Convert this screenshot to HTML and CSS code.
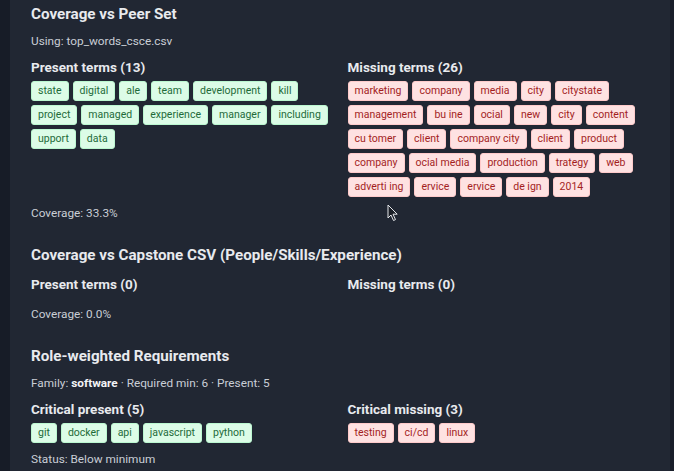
FILE: index.html
```html
<!DOCTYPE html>
<html lang="en">
<head>
<meta charset="utf-8">
<title>Coverage</title>
<link rel="stylesheet" href="styles.css">
</head>
<body>
<div class="page">
  <div class="rail"></div>
  <main class="card">
    <section class="block">
      <h2>Coverage vs Peer Set</h2>
      <p class="meta">Using: top_words_csce.csv</p>
      <div class="cols">
        <div class="col">
          <h3>Present terms (13)</h3>
          <div class="chips">
            <span class="chip ok">state</span><span class="chip ok">digital</span><span class="chip ok">ale</span><span class="chip ok">team</span><span class="chip ok">development</span><span class="chip ok">kill</span><span class="chip ok">project</span><span class="chip ok">managed</span><span class="chip ok">experience</span><span class="chip ok">manager</span><span class="chip ok">including</span><span class="chip ok">upport</span><span class="chip ok">data</span>
          </div>
        </div>
        <div class="col">
          <h3>Missing terms (26)</h3>
          <div class="chips">
            <span class="chip bad">marketing</span><span class="chip bad">company</span><span class="chip bad">media</span><span class="chip bad">city</span><span class="chip bad">citystate</span><span class="chip bad">management</span><span class="chip bad">bu ine</span><span class="chip bad">ocial</span><span class="chip bad">new</span><span class="chip bad">city</span><span class="chip bad">content</span><span class="chip bad">cu tomer</span><span class="chip bad">client</span><span class="chip bad">company city</span><span class="chip bad">client</span><span class="chip bad">product</span><span class="chip bad">company</span><span class="chip bad">ocial media</span><span class="chip bad">production</span><span class="chip bad">trategy</span><span class="chip bad">web</span><span class="chip bad">adverti ing</span><span class="chip bad">ervice</span><span class="chip bad">ervice</span><span class="chip bad">de ign</span><span class="chip bad">2014</span>
          </div>
        </div>
      </div>
      <p class="meta cov">Coverage: 33.3%</p>
    </section>

    <section class="block">
      <h2>Coverage vs Capstone CSV (People/Skills/Experience)</h2>
      <div class="cols tight">
        <div class="col"><h3>Present terms (0)</h3></div>
        <div class="col"><h3>Missing terms (0)</h3></div>
      </div>
      <p class="meta cov">Coverage: 0.0%</p>
    </section>

    <section class="block">
      <h2>Role-weighted Requirements</h2>
      <p class="meta">Family: <b>software</b> · Required min: 6 · Present: 5</p>
      <div class="cols">
        <div class="col">
          <h3>Critical present (5)</h3>
          <div class="chips">
            <span class="chip ok">git</span><span class="chip ok">docker</span><span class="chip ok">api</span><span class="chip ok">javascript</span><span class="chip ok">python</span>
          </div>
        </div>
        <div class="col">
          <h3>Critical missing (3)</h3>
          <div class="chips">
            <span class="chip bad">testing</span><span class="chip bad">ci/cd</span><span class="chip bad">linux</span>
          </div>
        </div>
      </div>
      <p class="meta cov">Status: Below minimum</p>
    </section>

    <svg class="cursor" width="12" height="18" viewBox="0 0 12 18" aria-hidden="true">
      <path d="M1 1 L1 14 L4 11 L6.5 16.5 L8.5 15.6 L6 10.2 L10.2 10.2 Z" fill="#1b1f27" stroke="#e5e7eb" stroke-width="1" stroke-linejoin="round"/>
    </svg>
  </main>
  <div class="rail-r"></div>
</div>
</body>
</html>
```

FILE: styles.css
```css
* { box-sizing: border-box; }
html, body { margin: 0; padding: 0; }
body {
  background: #212733;
  font-family: Roboto, "Open Sans", sans-serif;
  color: #d1d5db;
  width: 674px;
  height: 471px;
  overflow: hidden;
}
.page {
  display: flex;
  height: 471px;
}
.rail {
  width: 10px;
  flex: none;
  background: #171c27;
}
.rail-r {
  width: 4px;
  flex: none;
  background: #191e2a;
}
.card {
  position: relative;
  flex: 1;
  background: #212733;
  padding: 4px 22px 0 21px;
}
.block { margin-bottom: 24px; }
h2 {
  margin: 0;
  font-size: 15.2px;
  line-height: 20px;
  font-weight: 700;
  color: #e8eaee;
}
h3 {
  margin: 0 0 5px;
  font-size: 13.5px;
  line-height: 18px;
  font-weight: 700;
  color: #e8eaee;
}
.meta {
  margin: 9px 0;
  font-size: 11.8px;
  line-height: 16px;
  color: #c9ced6;
}
.meta b { color: #f3f4f6; font-weight: 700; }
.meta.cov { margin: 8px 0 0; }
.cols {
  display: grid;
  grid-template-columns: 1fr 1fr;
  column-gap: 16px;
}
.cols.tight { margin-top: 10px; }
.chips {
  display: flex;
  flex-wrap: wrap;
  gap: 4px;
}
.chip {
  display: inline-block;
  font-size: 10.5px;
  line-height: 14px;
  padding: 2px 6px;
  border-radius: 3px;
  border: 1px solid;
  height: 20px;
}
.chip.ok {
  background: #dcfce7;
  border-color: #bbf7d0;
  color: #1f6b3a;
}
.chip.bad {
  background: #fee2e2;
  border-color: #fecaca;
  color: #a31f1f;
}
.cursor {
  position: absolute;
  left: 377px;
  top: 204px;
}
```
